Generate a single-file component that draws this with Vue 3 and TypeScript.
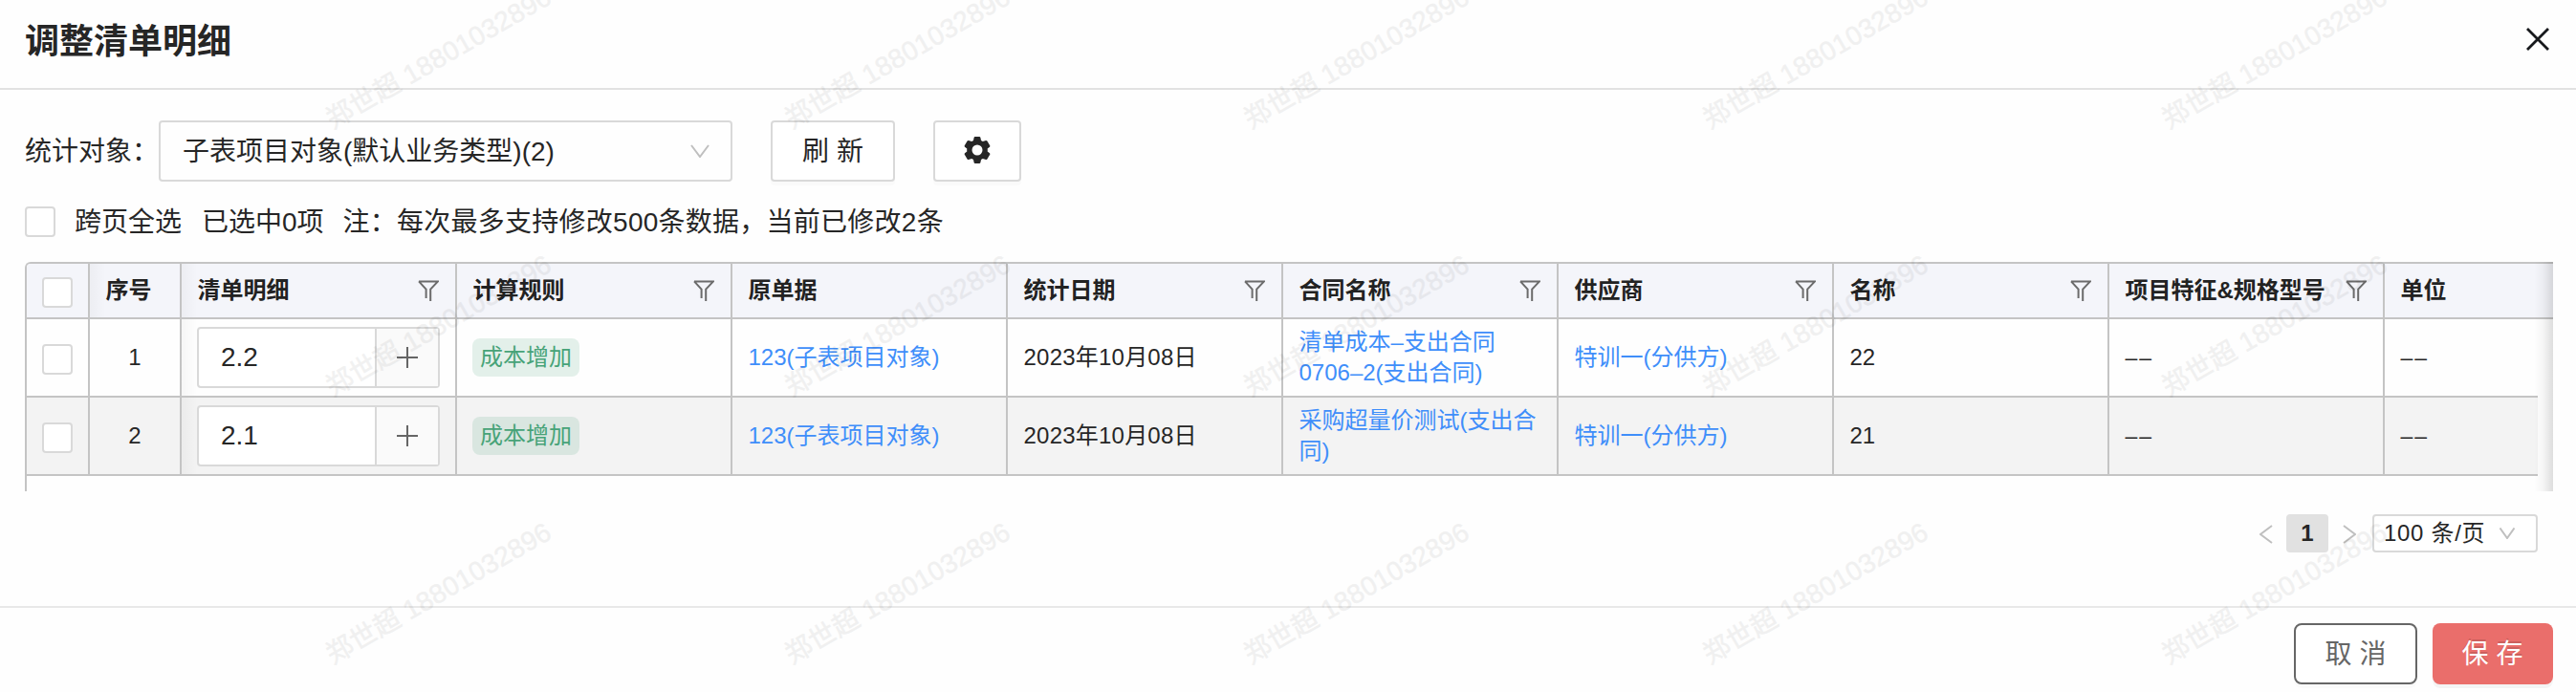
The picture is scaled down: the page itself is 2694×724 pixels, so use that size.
<script setup lang="ts">
import { ref } from 'vue'

interface Column {
  key: string
  title: string
  filter: boolean
  link?: boolean
}

interface Row {
  index: number
  item: string
  rule: string
  cells: Record<string, string>
}

const columns: Column[] = [
  { key: 'source', title: '原单据', filter: false, link: true },
  { key: 'date', title: '统计日期', filter: true },
  { key: 'contract', title: '合同名称', filter: true, link: true },
  { key: 'supplier', title: '供应商', filter: true, link: true },
  { key: 'name', title: '名称', filter: true },
  { key: 'spec', title: '项目特征&规格型号', filter: true },
  { key: 'unit', title: '单位', filter: false },
]

const leading: Column[] = [
  { key: 'item', title: '清单明细', filter: true },
  { key: 'rule', title: '计算规则', filter: true },
]

const EMPTY = '––'

const rows = ref<Row[]>([
  {
    index: 1,
    item: '2.2',
    rule: '成本增加',
    cells: {
      source: '123(子表项目对象)',
      date: '2023年10月08日',
      contract: '清单成本–支出合同\n0706–2(支出合同)',
      supplier: '特训一(分供方)',
      name: '22',
      spec: EMPTY,
      unit: EMPTY,
    },
  },
  {
    index: 2,
    item: '2.1',
    rule: '成本增加',
    cells: {
      source: '123(子表项目对象)',
      date: '2023年10月08日',
      contract: '采购超量价测试(支出合\n同)',
      supplier: '特训一(分供方)',
      name: '21',
      spec: EMPTY,
      unit: EMPTY,
    },
  },
])

const watermark = '郑世超 18801032896'
</script>

<template>
  <div class="dialog">
    <header class="head">
      <h1 class="title">调整清单明细</h1>
      <svg class="close" viewBox="0 0 24 24"><path d="M1 1L23 23M23 1L1 23" /></svg>
    </header>

    <main class="body">
      <div class="toolbar">
        <span class="label">统计对象：</span>
        <div class="select">
          <span>子表项目对象(默认业务类型)(2)</span>
          <svg class="arrow" viewBox="0 0 20 14"><path d="M1 1L10 13L19 1" /></svg>
        </div>
        <button class="btn refresh">刷 新</button>
        <button class="btn setting">
          <svg class="gear" viewBox="0 0 28 28">
            <path
              fill-rule="evenodd"
              d="M10.6 1Q10.8 0 11.8 0H16.2Q17.2 0 17.4 1L18 3.9Q19 4.3 19.8 4.9L23 4Q23.9 3.8 24.4 4.6L27.2 9.2Q27.6 10 27 10.7L24.7 12.4Q24.9 14 24.7 15.6L27 17.3Q27.6 18 27.2 18.8L24.4 23.4Q23.9 24.2 23 24L19.8 23.1Q19 23.7 18 24.1L17.4 27Q17.2 28 16.2 28H11.8Q10.8 28 10.6 27L10 24.1Q9 23.7 8.2 23.1L5 24Q4.1 24.2 3.6 23.4L0.8 18.8Q0.4 18 1 17.3L3.3 15.6Q3.1 14 3.3 12.4L1 10.7Q0.4 10 0.8 9.2L3.6 4.6Q4.1 3.8 5 4L8.2 4.9Q9 4.3 10 3.9ZM14 8.5A5.5 5.5 0 1 0 14 19.5A5.5 5.5 0 1 0 14 8.5Z"
            />
          </svg>
        </button>
      </div>

      <div class="summary">
        <span class="check"></span>
        <span class="all">跨页全选</span>
        <span class="picked">已选中0项</span>
        <span class="note">注：每次最多支持修改500条数据，当前已修改2条</span>
      </div>

      <div class="table">
        <div class="tr thead">
          <div class="cell pick"><span class="check"></span></div>
          <div class="cell shade">序号</div>
          <div
            v-for="(col, i) in [...leading, ...columns]"
            :key="col.key"
            class="cell"
            :class="{ shade: i === 0 }"
          >
            <span>{{ col.title }}</span>
            <svg v-if="col.filter" class="filter" viewBox="0 0 22 22">
              <path d="M1 1.4H21L13.2 9.6V22M1 1.4L8.6 9.6V19" />
            </svg>
          </div>
        </div>
        <div v-for="row in rows" :key="row.index" class="tr" :class="{ even: row.index % 2 === 0 }">
          <div class="cell pick"><span class="check"></span></div>
          <div class="cell no">{{ row.index }}</div>
          <div class="cell shade">
            <div class="group">
              <span class="value">{{ row.item }}</span>
              <span class="addon">
                <svg class="plus" viewBox="0 0 22 22"><path d="M11 0V22M0 11H22" /></svg>
              </span>
            </div>
          </div>
          <div class="cell"><span class="tag">{{ row.rule }}</span></div>
          <div v-for="col in columns" :key="col.key" class="cell">
            <span
              :class="{
                link: col.link,
                date: col.key === 'date',
                empty: row.cells[col.key] === EMPTY,
              }"
            >{{ row.cells[col.key] }}</span>
          </div>
        </div>
        <div class="edge"></div>
      </div>

      <div class="pager">
        <svg class="step" viewBox="0 0 14 20"><path d="M13 1L1 10L13 19" /></svg>
        <span class="page">1</span>
        <svg class="step" viewBox="0 0 14 20"><path d="M1 1L13 10L1 19" /></svg>
        <div class="size">
          <span class="per">100 条/页</span>
          <svg class="arrow small" viewBox="0 0 16 12"><path d="M0.5 0.5L8 11L15.5 0.5" /></svg>
        </div>
      </div>
    </main>

    <footer class="foot">
      <button class="btn cancel">取 消</button>
      <button class="btn save">保 存</button>
    </footer>

    <div class="watermarks">
      <div v-for="n in 15" :key="n" class="mark"><span>{{ watermark }}</span></div>
    </div>
  </div>
</template>

<style>
body {
  margin: 0;
  background: #fff;
}
</style>

<style scoped>
* {
  box-sizing: border-box;
}
.dialog {
  position: relative;
  display: flex;
  flex-direction: column;
  width: 2694px;
  height: 724px;
  overflow: hidden;
  background: #fefefe;
  color: #262626;
  font-family: 'Liberation Sans', 'Noto Sans CJK SC', sans-serif;
  font-size: 28px;
  line-height: 40px;
}
svg {
  display: block;
  flex: none;
  fill: none;
  stroke: #bfbfbf;
  stroke-width: 2;
}
.head {
  display: flex;
  flex: none;
  justify-content: space-between;
  align-items: flex-start;
  height: 94px;
  padding: 16px 28px 0 26px;
  border-bottom: 2px solid #e2e2e2;
}
.title {
  margin: 0;
  padding-top: 2px;
  font-size: 36px;
  line-height: 52px;
  font-weight: 700;
}
.close {
  width: 24px;
  height: 24px;
  margin-top: 13px;
  stroke: #17191c;
  stroke-width: 2.8;
}
.body {
  flex: 1;
  padding: 32px 24px 0 26px;
}
.toolbar {
  display: flex;
  align-items: center;
  height: 64px;
}
.label {
  width: 140px;
  padding-top: 2px;
  white-space: nowrap;
}
.select {
  display: flex;
  align-items: center;
  justify-content: space-between;
  width: 600px;
  height: 64px;
  padding: 0 22px 0 23px;
  border: 2px solid #d9d9d9;
  border-radius: 4px;
}
.select span {
  padding-top: 2px;
}
.arrow {
  width: 20px;
  height: 14px;
}
.btn {
  display: flex;
  align-items: center;
  justify-content: center;
  height: 64px;
  padding: 2px 0 0;
  border: 2px solid #d9d9d9;
  border-radius: 4px;
  background: #fff;
  color: inherit;
  font: inherit;
  box-shadow: 0 4px 0 rgba(0, 0, 0, 0.015);
}
.refresh {
  width: 130px;
  margin-left: 40px;
}
.setting {
  width: 92px;
  margin-left: 40px;
  padding: 0 0 2px;
}
.gear {
  width: 28px;
  height: 28px;
  fill: #262626;
  stroke: none;
}
.summary {
  display: flex;
  align-items: center;
  height: 32px;
  margin-top: 26px;
}
.summary span:not(.check) {
  padding-top: 2px;
}
.check {
  flex: none;
  width: 32px;
  height: 32px;
  border: 2px solid #d9d9d9;
  border-radius: 4px;
  background: #fff;
}
.all {
  margin-left: 20px;
}
.picked {
  margin: 0 20px 0 21px;
}
.note {
  letter-spacing: 0.25px;
}
.table {
  position: relative;
  height: 240px;
  margin-top: 26px;
  border-top: 2px solid #c4c4c4;
  border-left: 2px solid #c4c4c4;
  border-radius: 6px 0 0 0;
  font-size: 24px;
  line-height: 32px;
}
.tr {
  display: grid;
  grid-template-columns: 66px 96px repeat(8, 288px) 160px;
  width: 2626px;
  height: 82px;
  border-bottom: 2px solid #c4c4c4;
}
.thead {
  grid-template-columns: 66px 96px repeat(8, 288px) 176px;
  width: 2642px;
  height: 58px;
  border-radius: 4px 0 0 0;
  background: #f4f5fa;
  color: #222;
  font-weight: 700;
}
.even {
  background: #f3f3f3;
}
.cell {
  display: flex;
  align-items: center;
  justify-content: space-between;
  padding: 0 17px 0 16.5px;
  border-right: 2px solid #c4c4c4;
  white-space: pre;
}
.cell:last-child {
  border-right: 0;
}
.pick,
.no {
  justify-content: center;
  padding: 0;
}
.pick {
  padding-top: 3px;
}
.shade {
  background-image: linear-gradient(90deg, rgba(0, 0, 0, 0.03), rgba(0, 0, 0, 0) 16px);
}
.filter {
  width: 22px;
  height: 22px;
  stroke: #6b6b6b;
}
.group {
  display: flex;
  flex: none;
  width: 254px;
  height: 64px;
  margin-left: -0.5px;
  border: 2px solid #d9d9d9;
  border-radius: 4px;
  background: #fff;
  font-size: 28px;
}
.value {
  display: flex;
  align-items: center;
  flex: 1;
  padding-left: 23px;
}
.addon {
  display: flex;
  align-items: center;
  justify-content: center;
  width: 66px;
  border-left: 2px solid #d9d9d9;
  background: #fafafa;
}
.plus {
  width: 22px;
  height: 22px;
  stroke: #666;
}
.tag {
  height: 40px;
  margin-left: -0.5px;
  padding: 0 8px;
  border-radius: 8px;
  background: rgba(71, 163, 120, 0.15);
  color: #47a378;
  line-height: 40px;
}
.link {
  color: #3f8efa;
}
.date {
  letter-spacing: 0.22px;
}
.empty {
  font-size: 23px;
  letter-spacing: 2px;
}
.edge {
  position: absolute;
  top: -2px;
  right: 0;
  width: 20px;
  height: 240px;
  background: linear-gradient(270deg, rgba(0, 0, 0, 0.13), rgba(0, 0, 0, 0.04) 50%, rgba(0, 0, 0, 0));
}
.pager {
  display: flex;
  align-items: center;
  justify-content: flex-end;
  height: 40px;
  margin-top: 24px;
  padding-right: 16px;
  font-size: 24px;
}
.step {
  width: 14px;
  height: 20px;
  margin-top: 2px;
}
.page {
  width: 44px;
  height: 40px;
  margin: 0 15px 0 14px;
  border-radius: 4px;
  background: #e1e1e1;
  font-weight: 700;
  text-align: center;
}
.size {
  display: flex;
  align-items: center;
  justify-content: space-between;
  width: 173px;
  height: 40px;
  margin-left: 17px;
  padding: 0 22px 0 10px;
  border: 2px solid #d9d9d9;
  border-radius: 4px;
  background: #fff;
}
.per {
  letter-spacing: 0.7px;
}
.small {
  width: 16px;
  height: 12px;
}
.foot {
  display: flex;
  flex: none;
  justify-content: flex-end;
  gap: 16px;
  height: 90px;
  padding: 16px 24px 0;
  border-top: 2px solid #e8e8e8;
}
.cancel {
  width: 129px;
  border-color: #666;
  border-radius: 8px;
  color: #666;
}
.save {
  width: 126px;
  padding-right: 1px;
  border: 0;
  border-radius: 8px;
  background: #ea6e6b;
  color: #fff;
  text-shadow: 0 -2px 0 rgba(0, 0, 0, 0.12);
  box-shadow: 0 4px 0 rgba(0, 0, 0, 0.04);
}
.watermarks {
  position: absolute;
  top: -79px;
  left: 219px;
  display: grid;
  grid-template-columns: repeat(5, 480px);
  grid-auto-rows: 280px;
  opacity: 0.05;
  pointer-events: none;
}
.mark {
  display: flex;
  align-items: center;
  justify-content: center;
  color: #000;
  font-size: 28px;
  letter-spacing: 0.2px;
  -webkit-text-stroke: 0.6px #000;
}
.mark span {
  white-space: nowrap;
  transform: rotate(-30deg);
}
</style>
